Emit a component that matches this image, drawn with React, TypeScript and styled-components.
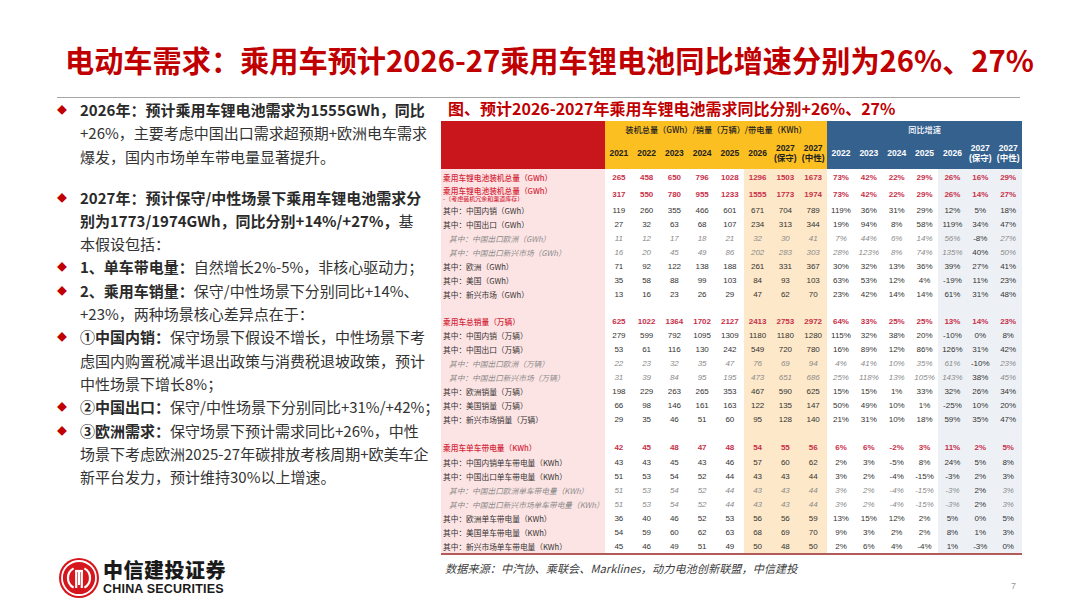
import styled, { createGlobalStyle } from 'styled-components';

const GlobalStyle = createGlobalStyle`
  html, body {
    margin: 0;
    padding: 0;
    background: #ffffff;
  }
  body {
    font-family: "Noto Sans CJK SC", "Noto Sans", sans-serif;
  }
`;

const colors = {
  title: '#c00000',
  text: '#333333',
  bullet: '#c00000',
  headRed: '#c9161d',
  headYellow: '#fcbf21',
  headBlue: '#35618f',
  pink: '#fde4e4',
  warm: '#fde8c9',
  cool: '#edf1f6',
  total: '#c8304a',
  sub: '#8a8a8a',
};

const Slide = styled.div`
  width: 1080px;
  height: 608px;
  overflow: hidden;
  background: #ffffff;
  display: flex;
  flex-direction: column;
`;

const Title = styled.h1`
  margin: 41px 0 0 65px;
  font-size: 29.2px;
  line-height: 36px;
  font-weight: 700;
  color: ${colors.title};
  white-space: nowrap;
`;

const Rule = styled.hr`
  margin: 20px 60px 0 57px;
  height: 0;
  border: 0;
  border-top: 1px solid #a6a6a6;
`;

const Body = styled.div`
  flex: 1;
  display: flex;
  padding: 0 58px 0 57px;
`;

const LeftColumn = styled.div`
  width: 384px;
  display: flex;
  flex-direction: column;
  padding-bottom: 10px;
`;

const Point = styled.div<{ $gap?: number }>`
  display: flex;
  margin-top: ${(p) => p.$gap ?? 0}px;
`;

const Diamond = styled.span`
  width: 23px;
  flex: none;
  font-size: 10px;
  line-height: 23.3px;
  color: ${colors.bullet};
`;

const PointText = styled.div`
  font-size: 15px;
  line-height: 23.3px;
  color: ${colors.text};
  white-space: nowrap;

  b {
    font-weight: 700;
    color: #2a2a2a;
  }
`;

const Brand = styled.div`
  margin-top: auto;
  display: flex;
  align-items: center;
  gap: 4px;
  padding-left: 2px;
`;

const BrandNames = styled.div`
  display: flex;
  flex-direction: column;
`;

const BrandCn = styled.div`
  font-size: 20px;
  line-height: 22px;
  font-weight: 900;
  color: #1a1a1a;
  letter-spacing: 0.5px;
`;

const BrandEn = styled.div`
  font-family: "Liberation Sans", Arial, sans-serif;
  font-size: 12.5px;
  line-height: 16px;
  font-weight: 700;
  color: #1a1a1a;
  letter-spacing: 0.2px;
`;

const RightColumn = styled.div`
  width: 581px;
  display: flex;
  flex-direction: column;
`;

const FigTitle = styled.div`
  margin-left: 7px;
  font-size: 16px;
  line-height: 20px;
  font-weight: 700;
  color: ${colors.title};
  white-space: nowrap;
`;

const Table = styled.table`
  margin-top: 3px;
  width: 581px;
  table-layout: fixed;
  border-collapse: collapse;
  border-bottom: 2px solid #b35a5a;
  font-family: "Liberation Sans", "Noto Sans CJK SC", sans-serif;
`;

const Row = styled.tr<{ $h: number }>`
  height: ${(p) => p.$h}px;
`;

type Band = 'red' | 'yellow' | 'blue';

const HeadCell = styled.th<{ $band: Band }>`
  padding: 0;
  background: ${(p) =>
    p.$band === 'red' ? colors.headRed : p.$band === 'yellow' ? colors.headYellow : colors.headBlue};
  color: ${(p) => (p.$band === 'blue' ? '#ffffff' : '#222222')};
  font-size: 8.5px;
  line-height: 10px;
  font-weight: 700;
  text-align: center;
  vertical-align: middle;
`;

const GroupLabel = styled.span`
  font-family: "Noto Sans CJK SC", sans-serif;
  font-size: 8.2px;
  font-weight: 500;
`;

type Kind = 'total' | 'main' | 'sub';
type Tone = 'plain' | 'warm' | 'cool';

const LabelCell = styled.td<{ $kind: Kind }>`
  padding: 0 0 0 ${(p) => (p.$kind === 'sub' ? 8 : 2)}px;
  background: ${colors.pink};
  font-family: "Noto Sans CJK SC", sans-serif;
  font-size: 7.7px;
  line-height: 9px;
  white-space: nowrap;
  overflow: hidden;
  color: ${(p) => (p.$kind === 'total' ? '#d42a3c' : p.$kind === 'sub' ? colors.sub : '#333333')};
  font-style: ${(p) => (p.$kind === 'sub' ? 'italic' : 'normal')};
  font-weight: ${(p) => (p.$kind === 'total' ? 500 : 400)};
`;

const Note = styled.div`
  font-size: 6px;
  line-height: 7px;
`;

const ValueCell = styled.td<{ $tone: Tone; $kind?: Kind; $dark?: boolean }>`
  padding: 0;
  background: ${(p) => (p.$tone === 'warm' ? colors.warm : p.$tone === 'cool' ? colors.cool : '#ffffff')};
  text-align: center;
  font-size: 8px;
  line-height: 9px;
  white-space: nowrap;
  color: ${(p) =>
    p.$dark ? '#333333' : p.$kind === 'total' ? colors.total : p.$kind === 'sub' ? colors.sub : '#333333'};
  font-style: ${(p) => (p.$kind === 'sub' && !p.$dark ? 'italic' : 'normal')};
  font-weight: ${(p) => (p.$kind === 'total' ? 700 : 400)};
`;

const Source = styled.div`
  margin-top: 5px;
  padding-left: 4px;
  font-size: 11.2px;
  line-height: 16px;
  font-style: italic;
  color: #404040;
  white-space: nowrap;
`;

const PageNo = styled.div`
  margin-top: 4px;
  padding-right: 6px;
  text-align: right;
  font-family: "Liberation Sans", Arial, sans-serif;
  font-size: 9px;
  line-height: 12px;
  color: #9a9a9a;
`;

interface DataRow {
  kind: Kind;
  label: string;
  note?: string;
  h: number;
  values: string[];
  growth: string[];
}

const sections: DataRow[][] = [
  [
    { kind: 'total', h: 16, label: '乘用车锂电池装机总量（GWh）', values: ['265', '458', '650', '796', '1028', '1296', '1503', '1673'], growth: ['73%', '42%', '22%', '29%', '26%', '16%', '29%'] },
    { kind: 'total', h: 18, label: '乘用车锂电池装机总量（GWh）', note: '-（考虑装机冗余和渠道库存）', values: ['317', '550', '780', '955', '1233', '1555', '1773', '1974'], growth: ['73%', '42%', '22%', '29%', '26%', '14%', '27%'] },
    { kind: 'main', h: 14.1, label: '其中：中国内销（GWh）', values: ['119', '260', '355', '466', '601', '671', '704', '789'], growth: ['119%', '36%', '31%', '29%', '12%', '5%', '18%'] },
    { kind: 'main', h: 14.1, label: '其中：中国出口（GWh）', values: ['27', '32', '63', '68', '107', '234', '313', '344'], growth: ['19%', '94%', '8%', '58%', '119%', '34%', '47%'] },
    { kind: 'sub', h: 14.1, label: '其中：中国出口欧洲（GWh）', values: ['11', '12', '17', '18', '21', '32', '30', '41'], growth: ['7%', '44%', '6%', '14%', '56%', '-8%', '27%'] },
    { kind: 'sub', h: 14.1, label: '其中：中国出口新兴市场（GWh）', values: ['16', '20', '45', '49', '86', '202', '283', '303'], growth: ['28%', '123%', '8%', '74%', '135%', '40%', '50%'] },
    { kind: 'main', h: 14.1, label: '其中：欧洲（GWh）', values: ['71', '92', '122', '138', '188', '261', '331', '367'], growth: ['30%', '32%', '13%', '36%', '39%', '27%', '41%'] },
    { kind: 'main', h: 14.1, label: '其中：美国（GWh）', values: ['35', '58', '88', '99', '103', '84', '93', '103'], growth: ['63%', '53%', '12%', '4%', '-19%', '11%', '23%'] },
    { kind: 'main', h: 14.1, label: '其中：新兴市场（GWh）', values: ['13', '16', '23', '26', '29', '47', '62', '70'], growth: ['23%', '42%', '14%', '14%', '61%', '31%', '48%'] },
  ],
  [
    { kind: 'total', h: 14.1, label: '乘用车总销量（万辆）', values: ['625', '1022', '1364', '1702', '2127', '2413', '2753', '2972'], growth: ['64%', '33%', '25%', '25%', '13%', '14%', '23%'] },
    { kind: 'main', h: 14.1, label: '其中：中国内销（万辆）', values: ['279', '599', '792', '1095', '1309', '1180', '1180', '1280'], growth: ['115%', '32%', '38%', '20%', '-10%', '0%', '8%'] },
    { kind: 'main', h: 14.1, label: '其中：中国出口（万辆）', values: ['53', '61', '116', '130', '242', '549', '720', '780'], growth: ['16%', '89%', '12%', '86%', '126%', '31%', '42%'] },
    { kind: 'sub', h: 14.1, label: '其中：中国出口欧洲（万辆）', values: ['22', '23', '32', '35', '47', '76', '69', '94'], growth: ['4%', '41%', '10%', '35%', '61%', '-10%', '23%'] },
    { kind: 'sub', h: 14.1, label: '其中：中国出口新兴市场（万辆）', values: ['31', '39', '84', '95', '195', '473', '651', '686'], growth: ['25%', '118%', '13%', '105%', '143%', '38%', '45%'] },
    { kind: 'main', h: 14.1, label: '其中：欧洲销量（万辆）', values: ['198', '229', '263', '265', '353', '467', '590', '625'], growth: ['15%', '15%', '1%', '33%', '32%', '26%', '34%'] },
    { kind: 'main', h: 14.1, label: '其中：美国销量（万辆）', values: ['66', '98', '146', '161', '163', '122', '135', '147'], growth: ['50%', '49%', '10%', '1%', '-25%', '10%', '20%'] },
    { kind: 'main', h: 14.1, label: '其中：新兴市场销量（万辆）', values: ['29', '35', '46', '51', '60', '95', '128', '140'], growth: ['21%', '31%', '10%', '18%', '59%', '35%', '47%'] },
  ],
  [
    { kind: 'total', h: 14.1, label: '乘用车单车带电量（KWh）', values: ['42', '45', '48', '47', '48', '54', '55', '56'], growth: ['6%', '6%', '-2%', '3%', '11%', '2%', '5%'] },
    { kind: 'main', h: 14.1, label: '其中：中国内销单车带电量（KWh）', values: ['43', '43', '45', '43', '46', '57', '60', '62'], growth: ['2%', '3%', '-5%', '8%', '24%', '5%', '8%'] },
    { kind: 'main', h: 14.1, label: '其中：中国出口单车带电量（KWh）', values: ['51', '53', '54', '52', '44', '43', '43', '44'], growth: ['3%', '2%', '-4%', '-15%', '-3%', '2%', '3%'] },
    { kind: 'sub', h: 14.1, label: '其中：中国出口欧洲单车带电量（KWh）', values: ['51', '53', '54', '52', '44', '43', '43', '44'], growth: ['3%', '2%', '-4%', '-15%', '-3%', '2%', '3%'] },
    { kind: 'sub', h: 14.1, label: '其中：中国出口新兴市场单车带电量（KWh）', values: ['51', '53', '54', '52', '44', '43', '43', '44'], growth: ['3%', '2%', '-4%', '-15%', '-3%', '2%', '3%'] },
    { kind: 'main', h: 14.1, label: '其中：欧洲单车带电量（KWh）', values: ['36', '40', '46', '52', '53', '56', '56', '59'], growth: ['13%', '15%', '12%', '2%', '5%', '0%', '5%'] },
    { kind: 'main', h: 14.1, label: '其中：美国单车带电量（KWh）', values: ['54', '59', '60', '62', '63', '68', '69', '70'], growth: ['9%', '3%', '2%', '2%', '8%', '1%', '3%'] },
    { kind: 'main', h: 14.1, label: '其中：新兴市场单车带电量（KWh）', values: ['45', '46', '49', '51', '49', '50', '48', '50'], growth: ['2%', '6%', '4%', '-4%', '1%', '-3%', '0%'] },
  ],
];

const gapHeights = [12.5, 14];

const volumeYears = ['2021', '2022', '2023', '2024', '2025', '2026', '2027|(保守)', '2027|(中性)'];
const growthYears = ['2022', '2023', '2024', '2025', '2026', '2027|(保守)', '2027|(中性)'];

function YearLabel({ text }: { text: string }) {
  const [year, scene] = text.split('|');
  return (
    <>
      {year}
      {scene && (
        <>
          <br />
          {scene}
        </>
      )}
    </>
  );
}

function GapRow({ h }: { h: number }) {
  return (
    <Row $h={h}>
      <LabelCell $kind="main" />
      {volumeYears.map((y, i) => (
        <ValueCell key={y} $tone={i >= 5 ? 'warm' : 'plain'} />
      ))}
      {growthYears.map((y, i) => (
        <ValueCell key={y} $tone={i >= 4 ? 'cool' : 'plain'} />
      ))}
    </Row>
  );
}

function DataLine({ row }: { row: DataRow }) {
  return (
    <Row $h={row.h}>
      <LabelCell $kind={row.kind}>
        {row.label}
        {row.note && <Note>{row.note}</Note>}
      </LabelCell>
      {row.values.map((v, i) => (
        <ValueCell key={i} $tone={i >= 5 ? 'warm' : 'plain'} $kind={row.kind}>
          {v}
        </ValueCell>
      ))}
      {row.growth.map((g, i) => (
        <ValueCell
          key={i}
          $tone={i >= 4 ? 'cool' : 'plain'}
          $kind={row.kind}
          $dark={row.kind === 'sub' && i === 5}
        >
          {g}
        </ValueCell>
      ))}
    </Row>
  );
}

function CiticLogo() {
  return (
    <svg width="40" height="40" viewBox="0 0 40 40">
      <circle cx="20" cy="20" r="20" fill="#d6161d" />
      <circle cx="20" cy="20" r="17" fill="none" stroke="#fff" strokeWidth="1.8" />
      <g fill="none" stroke="#fff" strokeWidth="2.2" strokeLinecap="butt">
        <path d="M14.6 10.4 A11 11 0 0 0 14.6 29.6" />
        <path d="M25.4 10.4 A11 11 0 0 1 25.4 29.6" />
        <line x1="17.2" y1="13" x2="17.2" y2="30" />
        <line x1="22.8" y1="13" x2="22.8" y2="30" />
        <line x1="16" y1="13" x2="24" y2="13" />
        <line x1="20" y1="13" x2="20" y2="27" />
      </g>
    </svg>
  );
}

export default function App() {
  return (
    <>
      <GlobalStyle />
      <Slide>
        <Title>电动车需求：乘用车预计2026-27乘用车锂电池同比增速分别为26%、27%</Title>
        <Rule />
        <Body>
          <LeftColumn>
            <Point>
              <Diamond>◆</Diamond>
              <PointText>
                <b>2026年：预计乘用车锂电池需求为1555GWh，同比</b>
                <br />
                +26%，主要考虑中国出口需求超预期+欧洲电车需求
                <br />
                爆发，国内市场单车带电量显著提升。
              </PointText>
            </Point>
            <Point $gap={17.7}>
              <Diamond>◆</Diamond>
              <PointText>
                <b>2027年：预计保守/中性场景下乘用车锂电池需求分</b>
                <br />
                <b>别为1773/1974GWh，同比分别+14%/+27%，</b>基
                <br />
                本假设包括：
              </PointText>
            </Point>
            <Point>
              <Diamond>◆</Diamond>
              <PointText>
                <b>1、单车带电量：</b>自然增长2%-5%，非核心驱动力；
              </PointText>
            </Point>
            <Point>
              <Diamond>◆</Diamond>
              <PointText>
                <b>2、乘用车销量：</b>保守/中性场景下分别同比+14%、
                <br />
                +23%，两种场景核心差异点在于：
              </PointText>
            </Point>
            <Point>
              <Diamond>◆</Diamond>
              <PointText>
                <b>①中国内销：</b>保守场景下假设不增长，中性场景下考
                <br />
                虑国内购置税减半退出政策与消费税退坡政策，预计
                <br />
                中性场景下增长8%；
              </PointText>
            </Point>
            <Point>
              <Diamond>◆</Diamond>
              <PointText>
                <b>②中国出口：</b>保守/中性场景下分别同比+31%/+42%；
              </PointText>
            </Point>
            <Point>
              <Diamond>◆</Diamond>
              <PointText>
                <b>③欧洲需求：</b>保守场景下预计需求同比+26%，中性
                <br />
                场景下考虑欧洲2025-27年碳排放考核周期+欧美车企
                <br />
                新平台发力，预计维持30%以上增速。
              </PointText>
            </Point>
            <Brand>
              <CiticLogo />
              <BrandNames>
                <BrandCn>中信建投证券</BrandCn>
                <BrandEn>CHINA SECURITIES</BrandEn>
              </BrandNames>
            </Brand>
          </LeftColumn>
          <RightColumn>
            <FigTitle>图、预计2026-2027年乘用车锂电池需求同比分别+26%、27%</FigTitle>
            <Table>
              <colgroup>
                <col style={{ width: 164 }} />
                {volumeYears.map((y) => (
                  <col key={y} style={{ width: 27.75 }} />
                ))}
                {growthYears.map((y) => (
                  <col key={y} style={{ width: 27.86 }} />
                ))}
              </colgroup>
              <thead>
                <Row $h={16}>
                  <HeadCell $band="red" rowSpan={2} />
                  <HeadCell $band="yellow" colSpan={8}>
                    <GroupLabel>装机总量（GWh）/销量（万辆）/带电量（KWh）</GroupLabel>
                  </HeadCell>
                  <HeadCell $band="blue" colSpan={7}>
                    <GroupLabel>同比增速</GroupLabel>
                  </HeadCell>
                </Row>
                <Row $h={32}>
                  {volumeYears.map((y) => (
                    <HeadCell key={y} $band="yellow">
                      <YearLabel text={y} />
                    </HeadCell>
                  ))}
                  {growthYears.map((y) => (
                    <HeadCell key={y} $band="blue">
                      <YearLabel text={y} />
                    </HeadCell>
                  ))}
                </Row>
              </thead>
              <tbody>
                {sections.map((rows, si) => (
                  <>
                    {si > 0 && <GapRow key={`gap-${si}`} h={gapHeights[si - 1]} />}
                    {rows.map((row, ri) => (
                      <DataLine key={`${si}-${ri}`} row={row} />
                    ))}
                  </>
                ))}
              </tbody>
            </Table>
            <Source>数据来源：中汽协、乘联会、Marklines，动力电池创新联盟，中信建投</Source>
            <PageNo>7</PageNo>
          </RightColumn>
        </Body>
      </Slide>
    </>
  );
}
